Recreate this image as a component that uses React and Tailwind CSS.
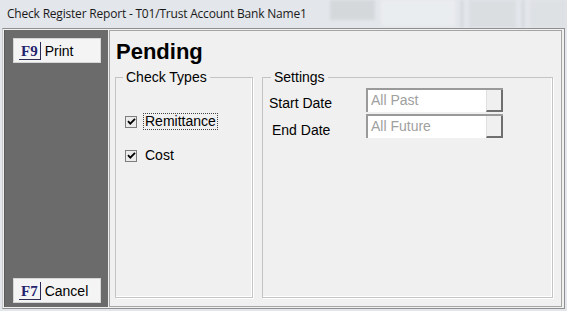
import React from "react";

function FKey({ label }) {
  return (
    <span className="inline-flex items-end h-[18px] pl-[2px] pr-[2px] border-r border-b border-[#2b2b55] text-[#23236e] font-bold text-[15px] leading-[16px]" style={{ fontFamily: '"Liberation Serif", serif' }}>
      {label}
    </span>
  );
}

function SideButton({ k, text }) {
  return (
    <div className="w-[88px] h-[25px] bg-[#f4f4f4] border border-[#d6d6d6] flex items-center pl-[5px] gap-[4px]">
      <FKey label={k} />
      <span className="text-[14px] text-black leading-none">{text}</span>
    </div>
  );
}

function Check({ label, focus }) {
  return (
    <div className="flex items-center gap-[6px] h-[17px]">
      <div className="ml-[1px] w-[12px] h-[12px] border border-[#7d7d7d] bg-[#ebebeb] flex items-center justify-center">
        <svg width="9" height="9" viewBox="0 0 9 9">
          <path d="M1 4.2 L3.3 6.6 L8 1.8" stroke="#000" strokeWidth="1.8" fill="none" />
        </svg>
      </div>
      <span className={"text-[14px] leading-[15px] px-[1px] " + (focus ? "border border-dotted border-[#444]" : "border border-transparent")}>{label}</span>
    </div>
  );
}

function DateBox({ text }) {
  return (
    <div className="w-[137px] h-[24px] flex border-t-2 border-l-2 border-[#9a9a9a] bg-white">
      <div className="flex-1 pl-[3px] text-[14px] leading-[20px] text-[#a0a0a0]">{text}</div>
      <div className="w-[17px] h-full bg-[#f0f0f0] border-r-2 border-b-2 border-[#6f6f6f] border-l border-l-[#e0e0e0]" />
    </div>
  );
}

export default function App() {
  return (
    <div className="w-[567px] h-[311px] bg-[#e3e6ea] overflow-hidden relative flex flex-col" style={{ fontFamily: '"Liberation Sans", Arial, sans-serif' }}>
      <div className="absolute left-[330px] top-0 w-[237px] h-[28px] flex gap-[6px] opacity-70 blur-[1.5px]">
        <div className="w-[48px] h-[20px] bg-[#d0d3d6]" />
        <div className="w-[80px] h-[26px] bg-[#eef0f2]" />
        <div className="w-[2px] h-[28px] bg-[#c8cbce]" />
        <div className="w-[50px] h-[28px] bg-[#d8dbde]" />
        <div className="w-[2px] h-[28px] bg-[#c8cbce]" />
        <div className="w-[40px] h-[28px] bg-[#dcdfe2]" />
      </div>
      <div className="relative h-[28px] pl-[7px] pt-[6px] text-[12px] leading-[16px] text-[#1a1a1a]" style={{ fontFamily: '"Open Sans", "Noto Sans", sans-serif', letterSpacing: "-0.2px" }}>
        Check Register Report - T01/Trust Account Bank Name1
      </div>
      <div className="relative ml-[2px] w-[563px] h-[281px] border border-[#8f8f8f] border-l-[#c9c9c9] bg-[#f0f0f0] flex p-[1px]">
        <div className="w-[104px] h-full bg-[#6b6b6b] flex flex-col justify-between pl-[8px] pt-[8px] pb-[4px] border-l border-[#5a5a5a]">
          <SideButton k="F9" text="Print" />
          <SideButton k="F7" text="Cancel" />
        </div>
        <div className="ml-[1px] w-[453px] h-full border border-[#a5a5a5] bg-[#f0f0f0] flex flex-col pl-[5px]">
          <div className="mt-[8px] pl-[1px] text-[22px] leading-[26px] font-bold text-black">Pending</div>
          <div className="mt-[12px] flex gap-[9px]">
            <div className="relative w-[138px] h-[221px] border border-[#c4c4c4] shadow-[inset_-1px_-1px_0_#fff,1px_1px_0_#fff]">
              <div className="absolute -top-[9px] left-[7px] px-[3px] bg-[#f0f0f0] text-[14px] leading-[16px]">Check Types</div>
              <div className="pl-[8px] pt-[35px] flex flex-col gap-[17px]">
                <Check label="Remittance" focus />
                <Check label="Cost" />
              </div>
            </div>
            <div className="relative w-[291px] h-[221px] border border-[#c4c4c4] shadow-[inset_-1px_-1px_0_#fff,1px_1px_0_#fff]">
              <div className="absolute -top-[9px] left-[8px] px-[3px] bg-[#f0f0f0] text-[14px] leading-[16px]">Settings</div>
              <div className="pt-[10px] pl-[6px] flex flex-col gap-[2px]">
                <div className="flex items-end">
                  <span className="w-[97px] text-[14px] leading-[16px] pb-[1px]">Start Date</span>
                  <DateBox text="All Past" />
                </div>
                <div className="flex items-end">
                  <span className="w-[97px] pl-[3px] text-[14px] leading-[16px] pb-[0px]">End Date</span>
                  <DateBox text="All Future" />
                </div>
              </div>
            </div>
          </div>
        </div>
      </div>
    </div>
  );
}
